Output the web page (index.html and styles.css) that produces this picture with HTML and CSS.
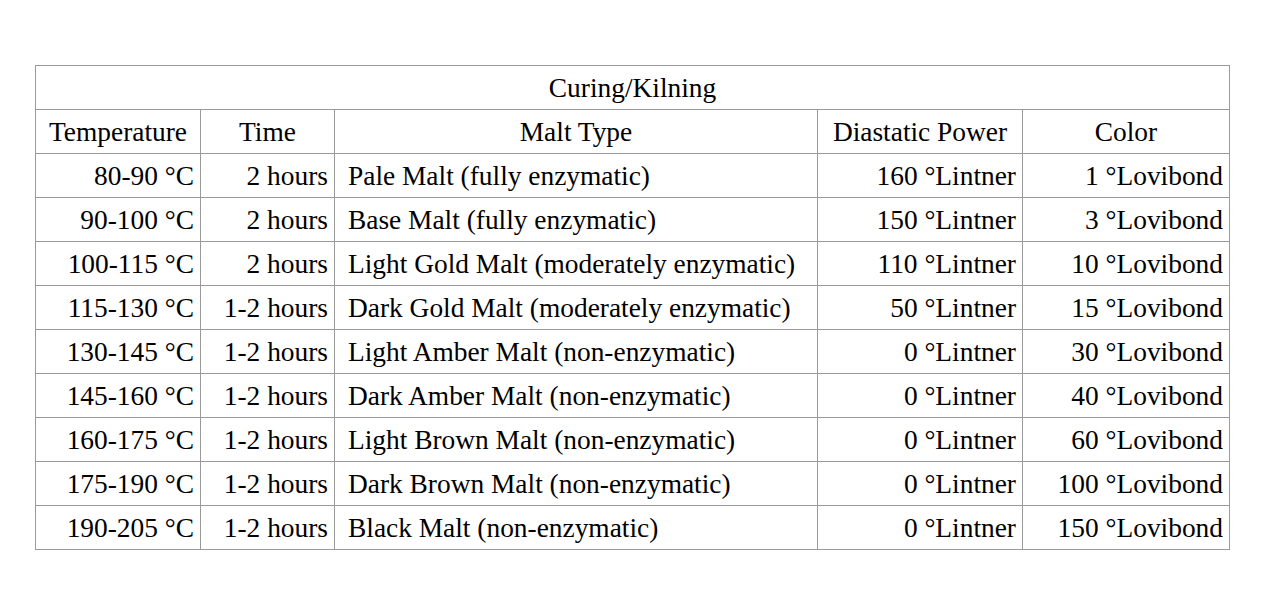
FILE: index.html
```html
<!DOCTYPE html>
<html>
<head>
<meta charset="utf-8">
<link rel="stylesheet" href="styles.css">
</head>
<body>
<table class="malt">
  <colgroup>
    <col class="c1"><col class="c2"><col class="c3"><col class="c4"><col class="c5">
  </colgroup>
  <thead>
    <tr><th colspan="5" class="title">Curing/Kilning</th></tr>
    <tr><th>Temperature</th><th>Time</th><th>Malt Type</th><th>Diastatic Power</th><th>Color</th></tr>
  </thead>
  <tbody>
    <tr><td class="r">80-90 °C</td><td class="r">2 hours</td><td>Pale Malt (fully enzymatic)</td><td class="r">160 °Lintner</td><td class="r">1 °Lovibond</td></tr>
    <tr><td class="r">90-100 °C</td><td class="r">2 hours</td><td>Base Malt (fully enzymatic)</td><td class="r">150 °Lintner</td><td class="r">3 °Lovibond</td></tr>
    <tr><td class="r">100-115 °C</td><td class="r">2 hours</td><td>Light Gold Malt (moderately enzymatic)</td><td class="r">110 °Lintner</td><td class="r">10 °Lovibond</td></tr>
    <tr><td class="r">115-130 °C</td><td class="r">1-2 hours</td><td>Dark Gold Malt (moderately enzymatic)</td><td class="r">50 °Lintner</td><td class="r">15 °Lovibond</td></tr>
    <tr><td class="r">130-145 °C</td><td class="r">1-2 hours</td><td>Light Amber Malt (non-enzymatic)</td><td class="r">0 °Lintner</td><td class="r">30 °Lovibond</td></tr>
    <tr><td class="r">145-160 °C</td><td class="r">1-2 hours</td><td>Dark Amber Malt (non-enzymatic)</td><td class="r">0 °Lintner</td><td class="r">40 °Lovibond</td></tr>
    <tr><td class="r">160-175 °C</td><td class="r">1-2 hours</td><td>Light Brown Malt (non-enzymatic)</td><td class="r">0 °Lintner</td><td class="r">60 °Lovibond</td></tr>
    <tr><td class="r">175-190 °C</td><td class="r">1-2 hours</td><td>Dark Brown Malt (non-enzymatic)</td><td class="r">0 °Lintner</td><td class="r">100 °Lovibond</td></tr>
    <tr><td class="r">190-205 °C</td><td class="r">1-2 hours</td><td>Black Malt (non-enzymatic)</td><td class="r">0 °Lintner</td><td class="r">150 °Lovibond</td></tr>
  </tbody>
</table>
</body>
</html>
```
FILE: styles.css
```css
html, body {
  margin: 0;
  padding: 0;
  background: #ffffff;
}
body {
  padding: 65px 0 0 35px;
  font-family: "Liberation Serif", "Times New Roman", serif;
  color: #000000;
}
.malt {
  border-collapse: collapse;
  table-layout: fixed;
  width: 1194px;
  font-size: 27.4px;
}
.c1 { width: 165px; }
.c2 { width: 134px; }
.c3 { width: 483px; }
.c4 { width: 205px; }
.c5 { width: 207px; }
.malt th, .malt td {
  border: 1px solid #9a9a9a;
  height: 41px;
  padding: 2px 6px 0 13px;
  vertical-align: middle;
  white-space: nowrap;
  font-weight: normal;
  line-height: 1;
}
.malt th {
  text-align: center;
  padding: 2px 6px 0;
}
.malt td {
  text-align: left;
}
.malt td.r {
  text-align: right;
}
```
